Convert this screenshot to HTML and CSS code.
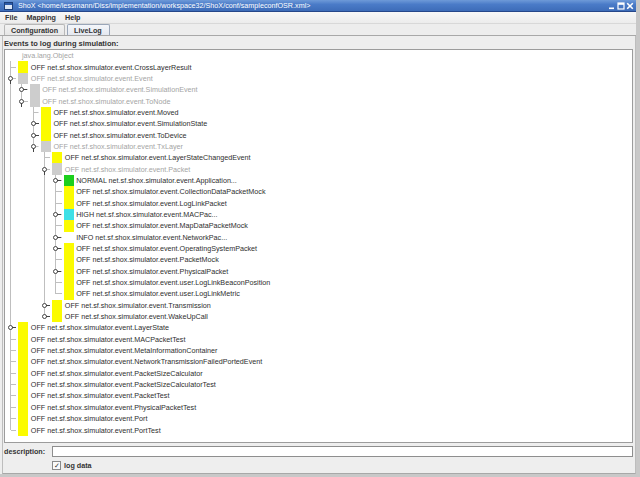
FILE: index.html
```html
<!DOCTYPE html>
<html>
<head>
<meta charset="utf-8">
<link rel="stylesheet" href="styles.css">
</head>
<body>
<div class="win">
  <div class="titlebar">
    <span class="appicon"><svg width="9" height="8" viewBox="0 0 9 8"><rect x="0.5" y="0.5" width="8" height="7" fill="#dbe6f6" stroke="#1c3f7a"/><rect x="1" y="1" width="7" height="2" fill="#2c5aa8"/></svg></span>
    <span class="title">ShoX &lt;home/lessmann/Diss/implementation/workspace32/ShoX/conf/sampleconfOSR.xml&gt;</span>
    <span class="controls">
      <svg width="8" height="8" viewBox="0 0 8 8"><rect x="1" y="5.5" width="5" height="1.6" fill="#fff"/></svg>
      <svg width="8" height="8" viewBox="0 0 8 8"><rect x="1" y="1" width="6" height="6" fill="none" stroke="#fff" stroke-width="1.2"/><rect x="1" y="1" width="6" height="1.8" fill="#fff"/></svg>
      <svg width="8" height="8" viewBox="0 0 8 8"><path d="M1.2 1.2 L6.8 6.8 M6.8 1.2 L1.2 6.8" stroke="#fff" stroke-width="1.6"/></svg>
    </span>
  </div>
  <div class="menubar">
    <span class="menu">File</span>
    <span class="menu">Mapping</span>
    <span class="menu">Help</span>
  </div>
  <div class="tabs">
    <span class="tab">Configuration</span>
    <span class="tab sel">LiveLog</span>
  </div>
  <div class="panel">
    <div class="lbl">Events to log during simulation:</div>
    <div class="tree">
      <div class="row root"><span class="t dis">java.lang.Object</span></div>

      <div class="row"><span class="g t"></span><span class="b y"></span><span class="t">OFF net.sf.shox.simulator.event.CrossLayerResult</span></div>
      <div class="row"><span class="g t"><i class="h ex"></i></span><span class="b gr"></span><span class="t dis">OFF net.sf.shox.simulator.event.Event</span></div>
      <div class="row"><span class="g v"></span><span class="g t"><i class="h co"></i></span><span class="b gr"></span><span class="t dis">OFF net.sf.shox.simulator.event.SimulationEvent</span></div>
      <div class="row"><span class="g v"></span><span class="g l"><i class="h ex"></i></span><span class="b gr"></span><span class="t dis">OFF net.sf.shox.simulator.event.ToNode</span></div>
      <div class="row"><span class="g v"></span><span class="g"></span><span class="g t"></span><span class="b y"></span><span class="t">OFF net.sf.shox.simulator.event.Moved</span></div>
      <div class="row"><span class="g v"></span><span class="g"></span><span class="g t"><i class="h co"></i></span><span class="b y"></span><span class="t">OFF net.sf.shox.simulator.event.SimulationState</span></div>
      <div class="row"><span class="g v"></span><span class="g"></span><span class="g t"><i class="h co"></i></span><span class="b y"></span><span class="t">OFF net.sf.shox.simulator.event.ToDevice</span></div>
      <div class="row"><span class="g v"></span><span class="g"></span><span class="g l"><i class="h ex"></i></span><span class="b gr"></span><span class="t dis">OFF net.sf.shox.simulator.event.TxLayer</span></div>
      <div class="row"><span class="g v"></span><span class="g"></span><span class="g"></span><span class="g t"></span><span class="b y"></span><span class="t">OFF net.sf.shox.simulator.event.LayerStateChangedEvent</span></div>
      <div class="row"><span class="g v"></span><span class="g"></span><span class="g"></span><span class="g t"><i class="h ex"></i></span><span class="b gr"></span><span class="t dis">OFF net.sf.shox.simulator.event.Packet</span></div>
      <div class="row"><span class="g v"></span><span class="g"></span><span class="g"></span><span class="g v"></span><span class="g t"><i class="h co"></i></span><span class="b gn"></span><span class="t">NORMAL net.sf.shox.simulator.event.Application...</span></div>
      <div class="row"><span class="g v"></span><span class="g"></span><span class="g"></span><span class="g v"></span><span class="g t"></span><span class="b y"></span><span class="t">OFF net.sf.shox.simulator.event.CollectionDataPacketMock</span></div>
      <div class="row"><span class="g v"></span><span class="g"></span><span class="g"></span><span class="g v"></span><span class="g t"></span><span class="b y"></span><span class="t">OFF net.sf.shox.simulator.event.LogLinkPacket</span></div>
      <div class="row"><span class="g v"></span><span class="g"></span><span class="g"></span><span class="g v"></span><span class="g t"><i class="h co"></i></span><span class="b cy"></span><span class="t">HIGH net.sf.shox.simulator.event.MACPac...</span></div>
      <div class="row"><span class="g v"></span><span class="g"></span><span class="g"></span><span class="g v"></span><span class="g t"></span><span class="b y"></span><span class="t">OFF net.sf.shox.simulator.event.MapDataPacketMock</span></div>
      <div class="row"><span class="g v"></span><span class="g"></span><span class="g"></span><span class="g v"></span><span class="g t"><i class="h co"></i></span><span class="b wh"></span><span class="t">INFO net.sf.shox.simulator.event.NetworkPac...</span></div>
      <div class="row"><span class="g v"></span><span class="g"></span><span class="g"></span><span class="g v"></span><span class="g t"><i class="h co"></i></span><span class="b y"></span><span class="t">OFF net.sf.shox.simulator.event.OperatingSystemPacket</span></div>
      <div class="row"><span class="g v"></span><span class="g"></span><span class="g"></span><span class="g v"></span><span class="g t"></span><span class="b y"></span><span class="t">OFF net.sf.shox.simulator.event.PacketMock</span></div>
      <div class="row"><span class="g v"></span><span class="g"></span><span class="g"></span><span class="g v"></span><span class="g t"><i class="h co"></i></span><span class="b y"></span><span class="t">OFF net.sf.shox.simulator.event.PhysicalPacket</span></div>
      <div class="row"><span class="g v"></span><span class="g"></span><span class="g"></span><span class="g v"></span><span class="g t"></span><span class="b y"></span><span class="t">OFF net.sf.shox.simulator.event.user.LogLinkBeaconPosition</span></div>
      <div class="row"><span class="g v"></span><span class="g"></span><span class="g"></span><span class="g v"></span><span class="g l"></span><span class="b y"></span><span class="t">OFF net.sf.shox.simulator.event.user.LogLinkMetric</span></div>
      <div class="row"><span class="g v"></span><span class="g"></span><span class="g"></span><span class="g t"><i class="h co"></i></span><span class="b y"></span><span class="t">OFF net.sf.shox.simulator.event.Transmission</span></div>
      <div class="row"><span class="g v"></span><span class="g"></span><span class="g"></span><span class="g l"><i class="h co"></i></span><span class="b y"></span><span class="t">OFF net.sf.shox.simulator.event.WakeUpCall</span></div>

      <div class="row"><span class="g t"><i class="h co"></i></span><span class="b y"></span><span class="t">OFF net.sf.shox.simulator.event.LayerState</span></div>
      <div class="row"><span class="g t"></span><span class="b y"></span><span class="t">OFF net.sf.shox.simulator.event.MACPacketTest</span></div>
      <div class="row"><span class="g t"></span><span class="b y"></span><span class="t">OFF net.sf.shox.simulator.event.MetaInformationContainer</span></div>
      <div class="row"><span class="g t"></span><span class="b y"></span><span class="t">OFF net.sf.shox.simulator.event.NetworkTransmissionFailedPortedEvent</span></div>
      <div class="row"><span class="g t"></span><span class="b y"></span><span class="t">OFF net.sf.shox.simulator.event.PacketSizeCalculator</span></div>
      <div class="row"><span class="g t"></span><span class="b y"></span><span class="t">OFF net.sf.shox.simulator.event.PacketSizeCalculatorTest</span></div>
      <div class="row"><span class="g t"></span><span class="b y"></span><span class="t">OFF net.sf.shox.simulator.event.PacketTest</span></div>
      <div class="row"><span class="g t"></span><span class="b y"></span><span class="t">OFF net.sf.shox.simulator.event.PhysicalPacketTest</span></div>
      <div class="row"><span class="g t"></span><span class="b y"></span><span class="t">OFF net.sf.shox.simulator.event.Port</span></div>
      <div class="row"><span class="g l"></span><span class="b y"></span><span class="t">OFF net.sf.shox.simulator.event.PortTest</span></div>
    </div>
    <div class="desc">
      <span class="dlbl">description:</span>
      <span class="field"></span>
    </div>
    <div class="chkrow">
      <span class="chk">&#10003;</span>
      <span class="chklbl">log data</span>
    </div>
  </div>
</div>
</body>
</html>
```

FILE: styles.css
```css
* { box-sizing: border-box; }
html, body { margin: 0; padding: 0; }
body {
  width: 640px;
  height: 477px;
  overflow: hidden;
  background: #d6d6d6;
  font-family: "Liberation Sans", Arial, sans-serif;
  color: #333;
}
.win {
  width: 640px;
  height: 477px;
  display: flex;
  flex-direction: column;
  background: #eeeeee;
  border-right: 4px solid #c8c8c8;
  border-bottom: 3px solid #c8c8c8;
}
.titlebar {
  height: 12px;
  flex: none;
  display: flex;
  align-items: center;
  background: linear-gradient(#6e9ad8, #4a7bc8 40%, #3d6cb8);
  border-bottom: 1px solid #26478a;
  padding-left: 4px;
  color: #fff;
}
.appicon { display: flex; width: 9px; height: 8px; margin-right: 5px; }
.title {
  font-size: 7.2px;
  white-space: nowrap;
  flex: 1;
}
.controls { display: flex; gap: 1px; margin-right: 2px; }
.controls svg { display: block; }
.menubar {
  height: 12px;
  flex: none;
  display: flex;
  align-items: center;
  gap: 9px;
  padding-left: 5px;
  background: linear-gradient(#f8f8f8, #ececec);
  border-bottom: 1px solid #d8d8d8;
}
.menu { font-size: 7.2px; font-weight: bold; color: #333; }
.tabs {
  height: 12px;
  flex: none;
  display: flex;
  align-items: flex-end;
  padding-left: 4px;
  gap: 2px;
  border-bottom: 1px solid #a8a8a8;
  background: #ededed;
}
.tab {
  height: 11px;
  display: flex;
  align-items: center;
  padding: 0 6px;
  font-size: 7.2px;
  font-weight: bold;
  color: #333;
  background: linear-gradient(#f2f2f2, #e6e6e6);
  border: 1px solid #b8b8b8;
  border-bottom: none;
  border-radius: 2px 2px 0 0;
}
.tab.sel {
  background: linear-gradient(#f4f6fa, #e4e8f0);
  border-color: #9aa6b8;
  padding: 0 7px 0 6px;
}
.panel {
  flex: 1;
  display: flex;
  flex-direction: column;
  margin-left: 2px;
  border-left: 1px solid #bdbdbd;
  border-right: 1px solid #bdbdbd;
  border-bottom: 1px solid #a8a8a8;
  padding: 0 2px 0 1px;
}
.lbl {
  height: 13px;
  display: flex;
  align-items: center;
  padding-top: 2px;
  font-size: 7.5px;
  font-weight: bold;
  color: #333;
}
.tree {
  height: 394px;
  flex: none;
  background: #fff;
  border: 1px solid #9c9c9c;
  display: flex;
  flex-direction: column;
  overflow: hidden;
}
.row {
  height: 11.35px;
  flex: none;
  display: flex;
  align-items: stretch;
}
.row.root { padding-left: 17px; }
.g {
  width: 11.33px;
  flex: none;
  display: flex;
  align-items: center;
  justify-content: center;
}
.g.v {
  background: linear-gradient(#bfbfbf, #bfbfbf) center top / 1px 100% no-repeat;
}
.g.t {
  background:
    linear-gradient(#bfbfbf, #bfbfbf) center top / 1px 100% no-repeat,
    linear-gradient(#bfbfbf, #bfbfbf) right center / 50% 1px no-repeat;
}
.g.l {
  background:
    linear-gradient(#bfbfbf, #bfbfbf) center top / 1px 50% no-repeat,
    linear-gradient(#bfbfbf, #bfbfbf) right center / 50% 1px no-repeat;
}
.h {
  display: block;
  width: 5px;
  height: 5px;
  border: 1px solid #444;
  border-radius: 50%;
  background: #fff;
  position: relative;
}
.h.co::after {
  content: "";
  position: absolute;
  left: 3px;
  top: 1px;
  width: 4px;
  height: 1px;
  background: #444;
}
.h.ex::after {
  content: "";
  position: absolute;
  left: 1px;
  top: 3px;
  width: 1px;
  height: 4px;
  background: #444;
}
.b {
  width: 10px;
  flex: none;
  margin-left: 2px;
  margin-right: 2.5px;
}
.b.y { background: #fbfb00; }
.b.gr { background: #cdcdcd; }
.b.gn { background: #1ccf1c; }
.b.cy { background: #3fe0e6; }
.b.wh { background: #fff; }
.t {
  display: flex;
  align-items: center;
  font-size: 7.2px;
  white-space: nowrap;
  color: #2e2e2e;
}
.t.dis { color: #a4a4a4; }
.desc {
  display: flex;
  align-items: center;
  height: 15px;
  padding-top: 2px;
}
.dlbl {
  width: 48px;
  font-size: 7.2px;
  font-weight: bold;
  color: #333;
}
.field {
  flex: 1;
  height: 11px;
  background: #fff;
  border: 1px solid #8e8e8e;
}
.chkrow {
  display: flex;
  align-items: center;
  height: 14px;
  padding-left: 48px;
}
.chk {
  width: 9px;
  height: 9px;
  border: 1px solid #8a8a8a;
  background: #fafafa;
  font-size: 7px;
  line-height: 7px;
  text-align: center;
  color: #333;
  margin-right: 3px;
}
.chklbl { font-size: 7.2px; font-weight: bold; color: #333; }
```
